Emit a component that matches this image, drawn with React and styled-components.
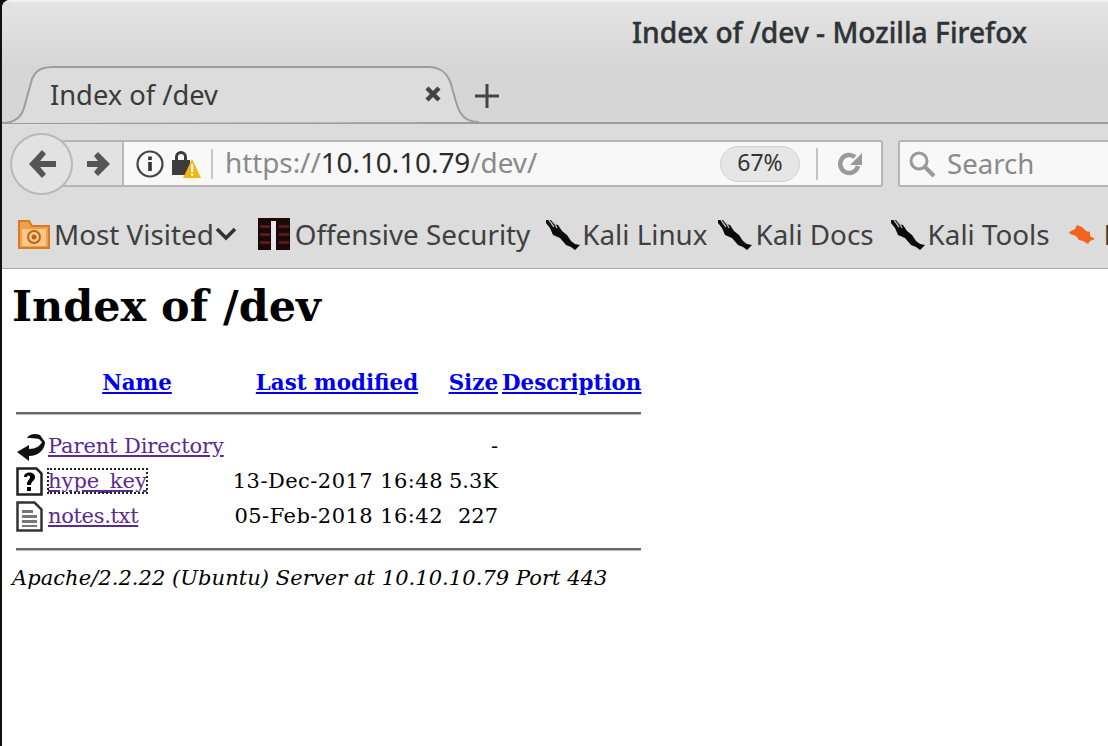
import React from "react";
import styled, { createGlobalStyle } from "styled-components";

const Global = createGlobalStyle`
  html, body { margin: 0; padding: 0; background: #fff; overflow: hidden; }
  #root { width: 1108px; height: 746px; overflow: hidden; }
`;

const Win = styled.div`
  width: 1108px; height: 746px; display: flex; flex-direction: column;
  border-left: 2px solid #111; box-sizing: border-box; overflow: hidden;
  background: #111;
  font-family: "Noto Sans", sans-serif;
`;
const Chrome = styled.div`
  flex: 0 0 269px; display: flex; flex-direction: column; overflow: hidden;
  background: #dcdcdc; border-bottom: 1px solid #a8a8a8; box-sizing: border-box;
  border-top-left-radius: 8px;
`;
const Title = styled.div`
  height: 66px; box-sizing: border-box; padding: 14px 0 0 630px;
  background: linear-gradient(#e4e4e4, #d6d6d6);
  border-top: 2px solid #f2f2f2;
  font-size: 28.2px; line-height: 32px; font-weight: 500; color: #2e3436;
  white-space: nowrap; -webkit-text-stroke: 0.4px #2e3436;
`;
const TabStrip = styled.div`
  height: 58px; display: flex; align-items: stretch; position: relative;
  background: #d6d6d6;
`;
const TabLine = styled.div`
  position: absolute; left: 0; right: 0; bottom: 0; height: 2px; background: #9c9c9c;
`;
const Tab = styled.div`
  position: relative; z-index: 1; width: 477px; height: 58px;
  display: flex; align-items: center; box-sizing: border-box; padding: 0 37px 2px 48px;
  color: #3a3a3a; font-size: 27.3px;
`;
const TabShape = styled.svg`
  position: absolute; left: 0; top: 0;
`;
const TabLabel = styled.span`
  position: relative; flex: 1;
`;
const CloseBtn = styled.svg`
  position: relative;
`;
const NewTab = styled.svg`
  margin: 17px 0 0 -5px; position: relative; z-index: 1;
`;
const NavBar = styled.div`
  height: 77px; display: flex; align-items: center; padding-left: 8px; gap: 15px;
  box-sizing: border-box; margin-top: 1px;
`;
const NavCluster = styled.div`
  flex: 0 0 873px; height: 47px; position: relative; display: flex; align-items: center;
`;
const UrlBox = styled.div`
  margin-left: 32px; flex: 1; min-width: 0; height: 47px; box-sizing: border-box;
  display: flex; align-items: center; background: #f8f8f8;
  border: 2px solid #b5b5b5; border-radius: 3px;
`;
const ForwardSlot = styled.div`
  flex: 0 0 80px; height: 100%; padding-left: 42px; box-sizing: border-box;
  display: flex; align-items: center;
  border-right: 2px solid #b8b8b8; background: #e2e2e2;
`;
const BackBtn = styled.div`
  position: absolute; left: 0; top: -7px; width: 63px; height: 62px; z-index: 1;
  border-radius: 50%; border: 2px solid #b8b8b8; background: #e2e2e2; box-sizing: border-box;
  display: flex; align-items: center; justify-content: center;
`;
const Identity = styled.div`
  display: flex; align-items: center; padding-left: 12px; height: 30px; box-sizing: border-box;
  border-right: 2px solid #c4c4c4; flex: 0 0 89px; gap: 8px;
`;
const UrlText = styled.div`
  flex: 1; padding: 0 0 3px 12px; font-size: 27.9px; letter-spacing: -0.05px;
  color: #8a8a8a; white-space: nowrap;
`;
const Host = styled.span`
  color: #2b2b2b;
`;
const Zoom = styled.div`
  flex: none; width: 80px; height: 36px; border-radius: 18px; background: #e6e6e6; border: 1px solid #d2d2d2;
  box-sizing: border-box; display: flex; align-items: center; justify-content: center; padding-bottom: 3px;
  font-size: 23px; color: #333; margin-right: 16px;
`;
const UrlSep = styled.div`
  flex: none; width: 2px; height: 32px; background: #c4c4c4; margin-right: 20px;
`;
const Reload = styled.svg`
  flex: none; margin-right: 19px;
`;
const SearchBox = styled.div`
  flex: 1; height: 47px; box-sizing: border-box; margin-right: -8px;
  display: flex; align-items: center; gap: 11px; padding-left: 8px;
  background: #f8f8f8; border: 2px solid #b5b5b5; border-radius: 3px;
  color: #8a8a8a; font-size: 27.6px;
`;
const SearchLabel = styled.span`
  margin-top: -2px;
`;
const Bookmarks = styled.div`
  flex: 1; display: flex; align-items: center; padding: 0 0 2px 16px; white-space: nowrap;
  font-size: 27.8px; color: #404040; overflow: hidden;
`;
const Mark = styled.div`
  display: flex; align-items: center; margin-right: ${p => p.$gap}px; gap: ${p => p.$inner}px; flex: none;
`;
const Chevron = styled.svg`
  margin-left: -3px;
`;
const Page = styled.main`
  flex: 1; background: #fff; padding: 10px 0 0 10px; color: #000;
  font-family: "DejaVu Serif", serif; font-size: 21px;
`;
const H1 = styled.h1`
  margin: 0; font-size: 42.9px; line-height: 54px; font-weight: 700;
`;
const Table = styled.div`
  display: grid; grid-template-columns: 32px 178px 222px 50px 143px; width: 625px; margin: 33px 0 0 4px;
  font-size: 21px; line-height: 34px;
`;
const HeadRow = styled.div`
  display: contents;
`;
const A = styled.a`
  color: ${p => p.$visited ? "#5b2a90" : "#0000ee"}; text-decoration: underline;
  letter-spacing: ${p => p.$track || 0}px;
`;
const HeadCell = styled.div`
  font-weight: 700; font-size: 21.4px; text-align: ${p => p.$align || "center"}; white-space: nowrap;
  padding-left: ${p => p.$pad || 0}px;
`;
const Rule = styled.div`
  grid-column: 1 / -1; height: 2px; background: #666; border-bottom: 1px solid #bbb; margin: ${p => p.$m};
`;
const IconCell = styled.div`
  height: 35px; display: flex; align-items: center;
`;
const NameCell = styled.div`
  white-space: nowrap; height: 35px;
`;
const Focus = styled.span`
  outline: 2px dotted #222; outline-offset: -2px; padding: 1px; margin-left: -1px;
`;
const DateCell = styled.div`
  text-align: right; white-space: nowrap; height: 35px; letter-spacing: 0.45px; padding-right: 5px;
`;
const SizeCell = styled.div`
  text-align: right; white-space: nowrap; height: 35px;
`;
const Empty = styled.div``;
const Address = styled.address`
  font-style: italic; font-size: 21px; line-height: 30px; margin-top: 12px; white-space: nowrap;
  letter-spacing: 0.05px;
`;

const Kali = () => (
  <svg width="34" height="34" viewBox="0 0 34 34">
    <path d="M0 3l5 0 3 4 4 1 4 6 5 4 4 6 4 3 5 1-5 5-4-3-5-2-6-7-7-3-3-7-4-5z" fill="#0a0a0a" />
    <path d="M3 3l5 7M8 5l3 6" stroke="#bdbdbd" strokeWidth="1.3" />
  </svg>
);

export default function App() {
  return (
    <Win>
      <Global />
      <Chrome>
        <Title>Index of /dev - Mozilla Firefox</Title>
        <TabStrip>
          <TabLine />
          <Tab>
            <TabShape width="477" height="58" viewBox="0 0 477 58">
              <path d="M0 57 C12 57 19 52 22 42 L30 13 C34 4 40 1 51 1 L426 1 C438 1 445 6 449 18 L454 36 C458 50 464 56 477 56" fill="#dcdcdc" stroke="#9c9c9c" strokeWidth="2" />
            </TabShape>
            <TabLabel>Index of /dev</TabLabel>
            <CloseBtn width="18" height="18" viewBox="0 0 18 18">
              <path d="M3 3l12 12M15 3L3 15" stroke="#444" strokeWidth="4.5" />
            </CloseBtn>
          </Tab>
          <NewTab width="26" height="26" viewBox="0 0 26 26">
            <path d="M13 1v24M1 13h24" stroke="#444" strokeWidth="3" />
          </NewTab>
        </TabStrip>
        <NavBar>
          <NavCluster>
            <BackBtn>
              <svg width="28" height="30" viewBox="0 0 28 30">
                <path d="M14 1L1 15l13 14 4-4-6-7h16v-6H12l6-7z" fill="#555" />
              </svg>
            </BackBtn>
            <UrlBox>
              <ForwardSlot>
                <svg width="25" height="26" viewBox="0 0 25 26">
                  <path d="M12 1l12 12-12 12-4-4 4-5H1v-6h11L8 5z" fill="#555" />
                </svg>
              </ForwardSlot>
              <Identity>
                <svg width="28" height="30" viewBox="0 0 28 30">
                  <circle cx="14" cy="15" r="12.5" fill="none" stroke="#444" strokeWidth="2.2" />
                  <rect x="12.2" y="13" width="3.6" height="9" fill="#333" />
                  <rect x="12.2" y="7.5" width="3.6" height="3.6" fill="#333" />
                </svg>
                <svg width="29" height="30" viewBox="0 0 29 30">
                  <path d="M3 8a6 6 0 0 1 12 0v3h3v15H0V11h3zm3 3h6V8a3 3 0 0 0-6 0z" fill="#3c3c3c" />
                  <path d="M20 10L29 29H11z" fill="#f5b40f" />
                  <rect x="19" y="15" width="2.2" height="8" fill="#fff" />
                  <rect x="19" y="24.5" width="2.2" height="2.2" fill="#fff" />
                </svg>
              </Identity>
              <UrlText>https://<Host>10.10.10.79</Host>/dev/</UrlText>
              <Zoom>67%</Zoom>
              <UrlSep />
              <Reload width="24" height="26" viewBox="0 0 24 26">
                <path d="M20 15a9 9 0 1 1-3-9" fill="none" stroke="#9a9a9a" strokeWidth="4.5" />
                <path d="M24 2v12H12z" fill="#9a9a9a" />
              </Reload>
            </UrlBox>
          </NavCluster>
          <SearchBox>
            <svg width="28" height="28" viewBox="0 0 28 28">
              <circle cx="11" cy="11" r="8" fill="none" stroke="#999" strokeWidth="3" />
              <path d="M17 17l9 9" stroke="#999" strokeWidth="4" />
            </svg>
            <SearchLabel>Search</SearchLabel>
          </SearchBox>
        </NavBar>
        <Bookmarks>
          <Mark $gap={21} $inner={4}>
            <svg width="32" height="32" viewBox="0 0 32 32">
              <path d="M1 3h10l3 5h17v22H1z" fill="#f0a04a" stroke="#d77a20" strokeWidth="2" />
              <rect x="4" y="11" width="24" height="17" fill="#fbc88a" />
              <circle cx="16" cy="19" r="6" fill="none" stroke="#b5651d" strokeWidth="2" />
              <circle cx="16" cy="19" r="2.5" fill="#b5651d" />
            </svg>
            Most Visited
            <Chevron width="22" height="14" viewBox="0 0 22 14">
              <path d="M2 2l9 9 9-9" fill="none" stroke="#333" strokeWidth="3.6" />
            </Chevron>
          </Mark>
          <Mark $gap={16} $inner={5}>
            <svg width="32" height="32" viewBox="0 0 32 32">
              <rect width="32" height="32" fill="#1b0808" />
              <rect x="2" y="7" width="10" height="3" fill="#5a1a1a" />
              <rect x="2" y="15" width="10" height="3" fill="#5a1a1a" />
              <rect x="2" y="23" width="10" height="3" fill="#5a1a1a" />
              <rect x="21" y="7" width="10" height="3" fill="#5a1a1a" />
              <rect x="21" y="15" width="10" height="3" fill="#5a1a1a" />
              <rect x="21" y="23" width="10" height="3" fill="#5a1a1a" />
              <rect x="13" y="3" width="5" height="29" fill="#e8e8e8" />
            </svg>
            Offensive Security
          </Mark>
          <Mark $gap={11} $inner={2}><Kali />Kali Linux</Mark>
          <Mark $gap={17} $inner={3}><Kali />Kali Docs</Mark>
          <Mark $gap={18} $inner={3}><Kali />Kali Tools</Mark>
          <Mark $gap={0} $inner={8}>
            <svg width="28" height="28" viewBox="0 0 28 28">
              <path d="M1 12l6-3 2-4 5 2 4 4 4 1 0 4 5 3-5 2-2 3-5-3-4-1-3-4-6-2z" fill="#f0641e" />
            </svg>
            Exploit-DB
          </Mark>
        </Bookmarks>
      </Chrome>
      <Page>
        <H1>Index of /dev</H1>
        <Table>
          <HeadRow>
            <Empty />
            <HeadCell><A href="#">Name</A></HeadCell>
            <HeadCell><A href="#">Last modified</A></HeadCell>
            <HeadCell $align="right"><A href="#">Size</A></HeadCell>
            <HeadCell $align="left" $pad={4}><A href="#">Description</A></HeadCell>
          </HeadRow>
          <Rule $m="12px 0 14px" />
          <IconCell>
            <svg width="30" height="30" viewBox="0 0 30 30">
              <path d="M11 6C13 2 19 1 24 3l5 7c0 8-7 14-16 14v5L1 20l12-7v4c7 0 11-3 13-7l-3-3c-4-1-8-1-12-1z" fill="#111" />
            </svg>
          </IconCell>
          <NameCell><A href="#" $visited $track={-0.12}>Parent Directory</A></NameCell>
          <DateCell />
          <SizeCell>-</SizeCell>
          <Empty />
          <IconCell>
            <svg width="27" height="29" viewBox="0 0 27 29">
              <path d="M1.5 1.5h19l5 5v21h-24z" fill="#fff" stroke="#222" strokeWidth="2.5" />
              <path d="M8 10c0-6 11-6 11 0 0 4-4 4-4 8h-4c0-5 3-5 3-8 0-2-3-2-3 0z" fill="#000" />
              <rect x="11" y="20" width="4" height="4" fill="#000" />
            </svg>
          </IconCell>
          <NameCell><Focus><A href="#" $visited>hype_key</A></Focus></NameCell>
          <DateCell>13-Dec-2017 16:48</DateCell>
          <SizeCell>5.3K</SizeCell>
          <Empty />
          <IconCell>
            <svg width="27" height="31" viewBox="0 0 27 31">
              <path d="M1.5 1.5h17l7 7v21h-24z" fill="#fff" stroke="#333" strokeWidth="2.5" />
              <path d="M6 9h11v3H6zM6 14h15v3H6zM6 19h15v3H6zM6 24h15v2H6z" fill="#777" />
            </svg>
          </IconCell>
          <NameCell><A href="#" $visited $track={-0.33}>notes.txt</A></NameCell>
          <DateCell>05-Feb-2018 16:42</DateCell>
          <SizeCell>227</SizeCell>
          <Empty />
          <Rule $m="14px 0 0" />
        </Table>
        <Address>Apache/2.2.22 (Ubuntu) Server at 10.10.10.79 Port 443</Address>
      </Page>
    </Win>
  );
}
